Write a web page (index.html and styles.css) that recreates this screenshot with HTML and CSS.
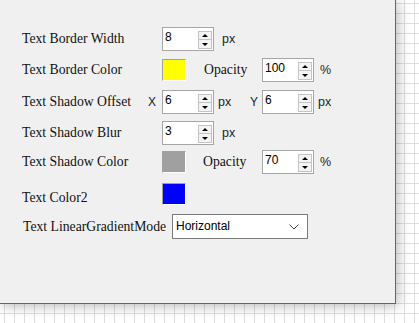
FILE: index.html
```html
<!DOCTYPE html>
<html>
<head>
<meta charset="utf-8">
<link rel="stylesheet" href="styles.css">
</head>
<body>
<div class="panel">
  <div class="row r1">
    <span class="label">Text Border Width</span>
    <span class="pre"></span>
    <div class="spin"><span class="val">8</span><span class="btns"><span class="b up"></span><span class="b dn"></span></span></div>
    <span class="unit u1">px</span>
  </div>
  <div class="row r2">
    <span class="label">Text Border Color</span>
    <span class="pre"></span>
    <span class="swatch yellow"></span>
    <span class="sublabel">Opacity</span>
    <div class="spin"><span class="val">100</span><span class="btns"><span class="b up"></span><span class="b dn"></span></span></div>
    <span class="unit u2">%</span>
  </div>
  <div class="row r3">
    <span class="label">Text Shadow Offset</span>
    <span class="pre">X</span>
    <div class="spin"><span class="val">6</span><span class="btns"><span class="b up"></span><span class="b dn"></span></span></div>
    <span class="unit u3">px</span>
    <span class="pre ypre">Y</span>
    <div class="spin"><span class="val">6</span><span class="btns"><span class="b up"></span><span class="b dn"></span></span></div>
    <span class="unit u4">px</span>
  </div>
  <div class="row r4">
    <span class="label">Text Shadow Blur</span>
    <span class="pre"></span>
    <div class="spin"><span class="val">3</span><span class="btns"><span class="b up"></span><span class="b dn"></span></span></div>
    <span class="unit u1">px</span>
  </div>
  <div class="row r5">
    <span class="label">Text Shadow Color</span>
    <span class="pre"></span>
    <span class="swatch gray"></span>
    <span class="sublabel">Opacity</span>
    <div class="spin"><span class="val">70</span><span class="btns"><span class="b up"></span><span class="b dn"></span></span></div>
    <span class="unit u2">%</span>
  </div>
  <div class="row r6">
    <span class="label lowlabel">Text Color2</span>
    <span class="pre"></span>
    <span class="swatch blue"></span>
  </div>
  <div class="row r7">
    <span class="label widelabel">Text LinearGradientMode</span>
    <div class="select"><span>Horizontal</span>
      <svg class="chev" width="10" height="6" viewBox="0 0 10 6"><path d="M0.5 0.5 L5 5 L9.5 0.5" fill="none" stroke="#444" stroke-width="1"/></svg>
    </div>
  </div>
</div>
</body>
</html>
```

FILE: styles.css
```css
html, body { margin: 0; padding: 0; }
body {
  width: 419px;
  height: 323px;
  overflow: hidden;
  background-color: #ffffff;
  background-image:
    linear-gradient(to right, transparent 4px, #dedede 4px, #dedede 5px, transparent 5px),
    linear-gradient(to bottom, transparent 3px, #dedede 3px, #dedede 4px, transparent 4px);
  background-size: 10px 10px, 10px 10px;
}
.panel {
  width: 396px;
  height: 304px;
  background: #f0f0f0;
  border-right: 1px solid #646464;
  border-bottom: 1px solid #646464;
  box-shadow: 2px 2px 12px rgba(0,0,0,0.28);
  padding-top: 27px;
  display: flex;
  flex-direction: column;
  font-family: "Liberation Serif", serif;
  color: #000;
  box-sizing: border-box;
}
.row {
  display: flex;
  align-items: center;
  height: 24px;
  padding-left: 22px;
}
.r2 { margin-top: 7px; }
.r3 { margin-top: 8px; }
.r4 { margin-top: 7px; }
.r5 { margin-top: 5px; }
.r6 { margin-top: 9px; height: 22px; }
.r7 { margin-top: 9px; height: 25px; }
.label {
  width: 126px;
  font-size: 13.7px;
  white-space: nowrap;
  color: #111;
}
.lowlabel { position: relative; top: 4px; }
.widelabel { width: 149px; padding-left: 1px; }
.pre {
  width: 14px;
  font-family: "Liberation Sans", sans-serif;
  font-size: 12px;
  color: #222;
}
.ypre { width: 12px; }
.spin {
  width: 52px;
  height: 24px;
  box-sizing: border-box;
  border: 1px solid #a6a6a6;
  background: #fff;
  display: flex;
  justify-content: space-between;
  align-items: flex-start;
  padding: 2px 1px 0 2px;
}
.val {
  font-family: "Liberation Sans", sans-serif;
  font-size: 12px;
  line-height: 14px;
}
.btns {
  display: flex;
  flex-direction: column;
  margin-top: 1px;
}
.b {
  width: 14px;
  height: 9px;
  box-sizing: border-box;
  border: 1px solid #c4c4c4;
  background: #f4f4f4;
  display: flex;
  justify-content: center;
  align-items: center;
}
.b + .b { border-top: none; }
.up::after {
  content: "";
  border-left: 3px solid transparent;
  border-right: 3px solid transparent;
  border-bottom: 3px solid #000;
}
.dn::after {
  content: "";
  border-left: 3px solid transparent;
  border-right: 3px solid transparent;
  border-top: 3px solid #000;
}
.unit {
  font-family: "Liberation Sans", sans-serif;
  font-size: 12.5px;
  color: #222;
}
.u1 { margin-left: 8px; }
.u2 { margin-left: 6px; }
.u3 { margin-left: 4px; width: 32px; }
.u4 { margin-left: 4px; }
.swatch {
  width: 24px;
  height: 22px;
  box-sizing: border-box;
  border-top: 1px solid #a0a0a0;
  border-left: 1px solid #a0a0a0;
  border-right: 1px solid #fff;
  border-bottom: 1px solid #fff;
}
.yellow { background: #ffff00; }
.gray { background: #a0a0a0; }
.blue { background: #0000ff; }
.sublabel {
  font-size: 13.7px;
  margin-left: 18px;
  width: 58px;
  color: #111;
}
.r5 .sublabel { margin-left: 17px; width: 59px; }
.select {
  width: 136px;
  height: 25px;
  box-sizing: border-box;
  border: 1px solid #7a7a7a;
  background: #fff;
  display: flex;
  align-items: center;
  justify-content: space-between;
  padding: 0 8px 0 3px;
  font-family: "Liberation Sans", sans-serif;
  font-size: 12px;
}
.select span { position: relative; top: -1px; }
```
